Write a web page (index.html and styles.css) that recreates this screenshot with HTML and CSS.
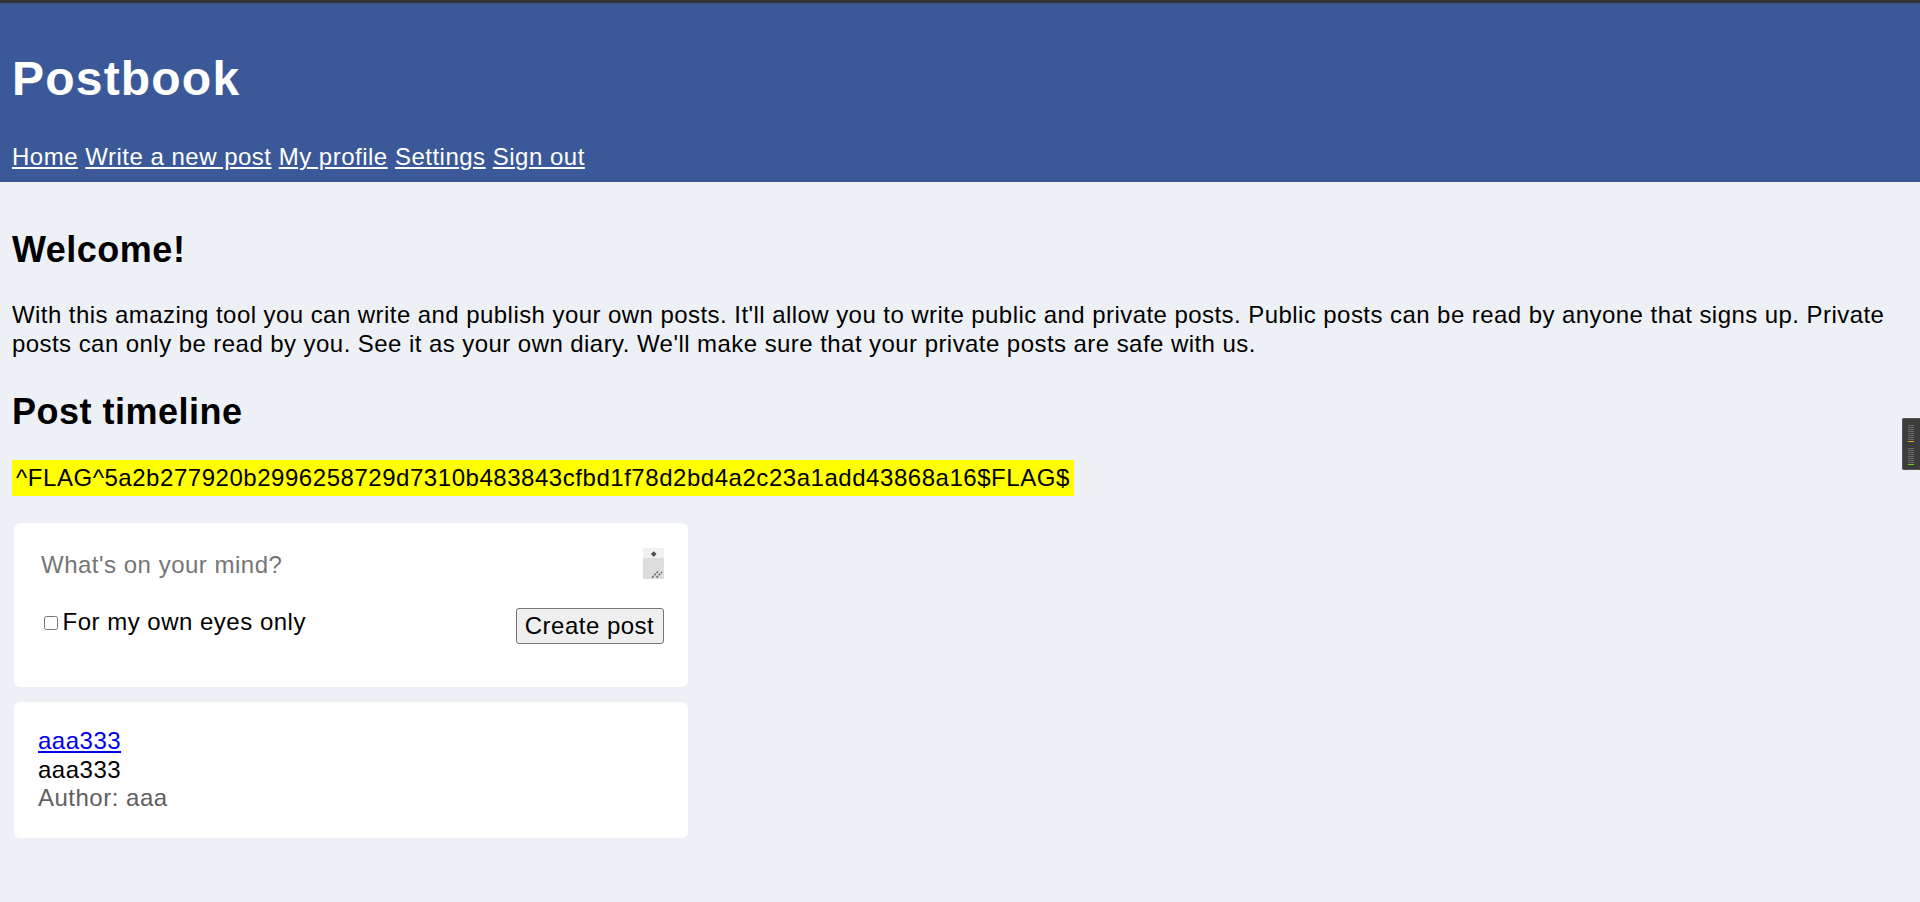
FILE: index.html
```html
<!DOCTYPE html>
<html lang="en">
<head>
<meta charset="utf-8">
<title>Postbook</title>
<link rel="stylesheet" href="styles.css">
</head>
<body>
<header class="site-header">
  <h1 class="brand">Postbook</h1>
  <nav class="nav"><a href="#">Home</a> <a href="#">Write a new post</a> <a href="#">My profile</a> <a href="#">Settings</a> <a href="#">Sign out</a></nav>
</header>
<main class="main">
  <h2 class="title">Welcome!</h2>
  <p class="intro">With this amazing tool you can write and publish your own posts. It'll allow you to write public and private posts. Public posts can be read by anyone that signs up. Private posts can only be read by you. See it as your own diary. We'll make sure that your private posts are safe with us.</p>
  <h2 class="title timeline-title">Post timeline</h2>
  <div class="flag-row"><span class="flag">^FLAG^5a2b277920b2996258729d7310b483843cfbd1f78d2bd4a2c23a1add43868a16$FLAG$</span></div>
  <form class="card composer">
    <div class="input-row">
      <textarea class="post-input" rows="1" placeholder="What's on your mind?"></textarea>
      <div class="fake-scroll">
        <div class="fs-top"><span class="fs-diamond"></span></div>
        <div class="fs-bottom">
          <svg width="21" height="21" viewBox="0 0 21 21"><path d="M9 19.5 L15.5 13" stroke="#555" stroke-width="1.2" stroke-dasharray="2.2 1"/><path d="M13.5 19.5 L19 14" stroke="#555" stroke-width="1.2" stroke-dasharray="2.2 1"/></svg>
        </div>
      </div>
    </div>
    <div class="action-row">
      <label class="private"><input type="checkbox" class="check"><span>For my own eyes only</span></label>
      <button type="button" class="create-btn">Create post</button>
    </div>
  </form>
  <div class="card post">
    <a href="#" class="post-title">aaa333</a>
    <div class="post-body">aaa333</div>
    <div class="post-author">Author: aaa</div>
  </div>
</main>
<div class="side-widget">
  <div class="sw-lines"></div>
  <div class="sw-mark sw-orange"></div>
  <div class="sw-lines"></div>
  <div class="sw-mark sw-green"></div>
</div>
</body>
</html>
```
FILE: styles.css
```css
html, body {
  margin: 0;
  padding: 0;
}
body {
  background: #edf0f5;
  font-family: "Liberation Sans", Arial, sans-serif;
  font-size: 24px;
  letter-spacing: 0.5px;
  color: #000;
  min-height: 902px;
}
.site-header {
  background: #3b5998;
  border-top: 3px solid #333;
  padding: 48px 12px 11px;
}
.brand {
  margin: 0;
  font-size: 48px;
  line-height: 55.2px;
  font-weight: bold;
  color: #fff;
  letter-spacing: 1.2px;
}
.nav {
  margin-top: 37px;
  line-height: 27.6px;
  color: #fff;
}
.nav a {
  color: #fff;
  text-decoration: underline;
}
.main {
  padding: 16px 12px 0;
}
.title {
  margin: 31px 0;
  font-size: 36px;
  line-height: 41.4px;
  font-weight: bold;
  letter-spacing: 0.5px;
}
.timeline-title {
  margin-bottom: 28px;
}
.intro {
  margin: 0 0 33px;
  line-height: 28.4px;
  letter-spacing: 0.44px;
}
.flag-row {
  display: flex;
  align-items: flex-start;
}
.flag {
  background: #ffff00;
  padding: 4px 4px;
  line-height: 28px;
  letter-spacing: 0.54px;
}
.card {
  background: #fff;
  border-radius: 6px;
  width: 674px;
  box-sizing: border-box;
  margin-left: 2px;
}
.composer {
  margin-top: 27px;
  padding: 25px 24px 24px;
}
.input-row {
  display: flex;
  height: 31px;
}
.post-input {
  flex: 1;
  height: 31px;
  box-sizing: border-box;
  border: none;
  outline: none;
  resize: none;
  overflow: hidden;
  padding: 3px 3px 0;
  font-family: inherit;
  font-size: 24px;
  letter-spacing: 0.5px;
  line-height: 27.6px;
  background: transparent;
  color: #000;
}
.post-input::placeholder {
  color: #757575;
}
.fake-scroll {
  width: 21px;
  display: flex;
  flex-direction: column;
}
.fs-top {
  height: 10px;
  background: #f1f1f1;
  display: flex;
  align-items: center;
  justify-content: center;
}
.fs-diamond {
  width: 3.5px;
  height: 3.5px;
  background: #505050;
  transform: rotate(45deg);
}
.fs-bottom {
  flex: 1;
  background: #dcdcdc;
  display: flex;
  align-items: flex-end;
}
.fs-bottom svg {
  display: block;
}
.action-row {
  display: flex;
  justify-content: space-between;
  align-items: flex-start;
  margin-top: 29px;
  margin-bottom: 19px;
}
.private {
  display: flex;
  align-items: flex-start;
  line-height: 27.6px;
}
.check {
  appearance: none;
  -webkit-appearance: none;
  width: 14px;
  height: 14px;
  margin: 8px 4.5px 0 6px;
  border: 1px solid #767676;
  border-radius: 2.5px;
  background: #fff;
  box-sizing: border-box;
}
.create-btn {
  width: 148px;
  height: 35.5px;
  margin-right: 0.5px;
  padding: 0;
  font-family: inherit;
  font-size: 24px;
  letter-spacing: 0.5px;
  color: #000;
  background: #efefef;
  border: 1px solid #767676;
  border-radius: 3px;
  box-sizing: border-box;
}
.post {
  margin-top: 15px;
  padding: 25px 24px 25px;
  line-height: 28.7px;
}
.post-title {
  color: #0000ee;
  text-decoration: underline;
}
.post-author {
  color: #606060;
}
.side-widget {
  position: fixed;
  right: 0;
  top: 418px;
  width: 18px;
  height: 52px;
  box-sizing: border-box;
  background: #3c3c3c;
  border: 1px solid #555;
  border-right: none;
  border-radius: 2px 0 0 2px;
  padding: 6px 0 0 5px;
  display: flex;
  flex-direction: column;
}
.sw-lines {
  width: 6px;
  height: 15px;
  background: repeating-linear-gradient(to bottom, #6a6a6a 0 1px, transparent 1px 2px);
}
.sw-mark {
  width: 6px;
  height: 1px;
  margin: 1px 0 6px;
}
.sw-orange {
  background: #f0a020;
}
.sw-green {
  background: #6ad01a;
  margin-bottom: 0;
}
```
